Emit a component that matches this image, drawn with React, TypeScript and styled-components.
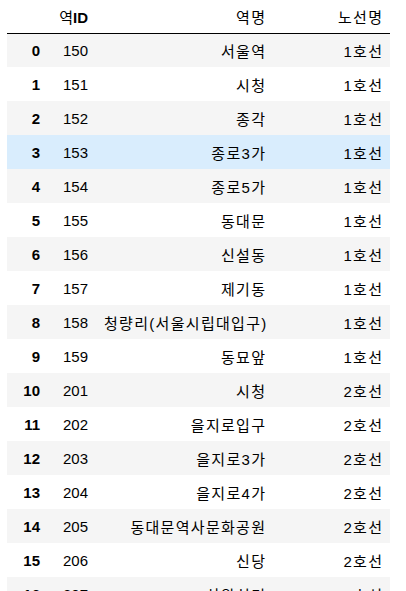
import * as React from 'react';
import styled, { createGlobalStyle } from 'styled-components';

const GlobalStyle = createGlobalStyle`
  html, body {
    margin: 0;
    padding: 0;
    background: #ffffff;
  }
  body {
    font-family: "Liberation Sans", "Noto Sans CJK KR", Arial, sans-serif;
    color: #000000;
    overflow: hidden;
  }
`;

const Wrapper = styled.div`
  padding-left: 7px;
`;

const Frame = styled.table`
  border-collapse: collapse;
  border-spacing: 0;
  table-layout: fixed;
  width: 383px;
  font-size: 15px;
`;

const HeadRow = styled.tr`
  height: 33px;
  border-bottom: 1px solid #000000;
`;

// hangul in the shot is wider than Noto's, so korean cells get a little tracking
const HeadCell = styled.th<{ $hangul?: boolean }>`
  padding: 0 ${p => (p.$hangul ? '6.7px' : '8px')} 0 8px;
  text-align: right;
  font-weight: normal;
  vertical-align: middle;
  white-space: nowrap;
  letter-spacing: ${p => (p.$hangul ? '1.3px' : 'normal')};
`;

const Latin = styled.span`
  font-weight: bold;
  letter-spacing: normal;
`;

const Row = styled.tr<{ $shaded: boolean; $hover: boolean }>`
  height: 34px;
  background: ${p => (p.$hover ? '#d9edfd' : p.$shaded ? '#f5f5f5' : '#ffffff')};
`;

const IndexCell = styled.th`
  padding: 0 8px;
  text-align: right;
  font-weight: bold;
  vertical-align: middle;
`;

const Cell = styled.td<{ $hangul?: boolean }>`
  padding: 0 ${p => (p.$hangul ? '6.7px' : '8px')} 0 8px;
  text-align: right;
  vertical-align: middle;
  white-space: nowrap;
  letter-spacing: ${p => (p.$hangul ? '1.3px' : 'normal')};
`;

type Station = { id: number, name: string, line: string };

const stations: Array<Station> = [
  { id: 150, name: '서울역', line: '1호선' },
  { id: 151, name: '시청', line: '1호선' },
  { id: 152, name: '종각', line: '1호선' },
  { id: 153, name: '종로3가', line: '1호선' },
  { id: 154, name: '종로5가', line: '1호선' },
  { id: 155, name: '동대문', line: '1호선' },
  { id: 156, name: '신설동', line: '1호선' },
  { id: 157, name: '제기동', line: '1호선' },
  { id: 158, name: '청량리(서울시립대입구)', line: '1호선' },
  { id: 159, name: '동묘앞', line: '1호선' },
  { id: 201, name: '시청', line: '2호선' },
  { id: 202, name: '을지로입구', line: '2호선' },
  { id: 203, name: '을지로3가', line: '2호선' },
  { id: 204, name: '을지로4가', line: '2호선' },
  { id: 205, name: '동대문역사문화공원', line: '2호선' },
  { id: 206, name: '신당', line: '2호선' },
  { id: 207, name: '상왕십리', line: '2호선' },
  { id: 208, name: '왕십리', line: '2호선' },
];

const HOVER_ROW = 3;

export default function App() {
  return (
    <Wrapper>
      <GlobalStyle />
      <Frame>
        <colgroup>
          <col style={{ width: 41 }} />
          <col style={{ width: 48 }} />
          <col style={{ width: 177 }} />
          <col style={{ width: 117 }} />
        </colgroup>
        <thead>
          <HeadRow>
            <HeadCell />
            <HeadCell>역<Latin>ID</Latin></HeadCell>
            <HeadCell $hangul>역명</HeadCell>
            <HeadCell $hangul>노선명</HeadCell>
          </HeadRow>
        </thead>
        <tbody>
          {stations.map((s, i) => (
            <Row key={i} $shaded={i % 2 === 0} $hover={i === HOVER_ROW}>
              <IndexCell>{i}</IndexCell>
              <Cell>{s.id}</Cell>
              <Cell $hangul>{s.name}</Cell>
              <Cell $hangul>{s.line}</Cell>
            </Row>
          ))}
        </tbody>
      </Frame>
    </Wrapper>
  );
}
